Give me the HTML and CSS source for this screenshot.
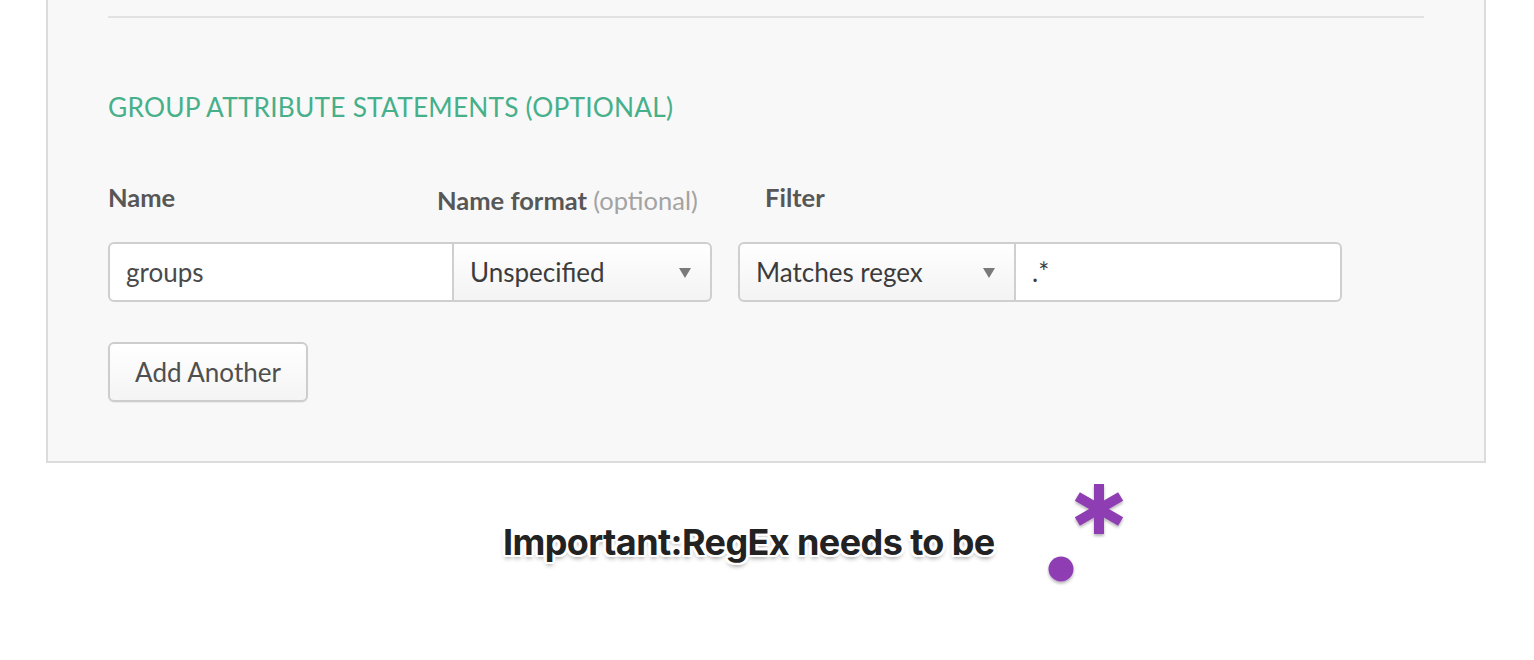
FILE: index.html
```html
<!DOCTYPE html>
<html>
<head>
<meta charset="utf-8">
<link rel="stylesheet" href="styles.css">
</head>
<body>
<div class="panel">
  <div class="divider"></div>
  <h2 class="section-title">GROUP ATTRIBUTE STATEMENTS (OPTIONAL)</h2>
  <div class="labels">
    <div class="label label-name">Name</div>
    <div class="label label-format">Name format <span class="opt">(optional)</span></div>
    <div class="label label-filter">Filter</div>
  </div>
  <div class="row">
    <div class="field field-name">groups</div>
    <div class="select select-format">Unspecified<span class="arrow"></span></div>
    <div class="select select-filter">Matches regex<span class="arrow"></span></div>
    <div class="field field-value">.*</div>
  </div>
  <button class="btn">Add Another</button>
</div>
<div class="note">
  <div class="note-text">Important:RegEx needs to be</div>
  <svg class="regex" width="90" height="110" viewBox="0 0 90 110" aria-label=".*">
    <defs>
      <filter id="sh" x="-30%" y="-30%" width="160%" height="160%">
        <feDropShadow dx="0" dy="2" stdDeviation="1.5" flood-color="#000" flood-opacity="0.3"/>
      </filter>
    </defs>
    <g filter="url(#sh)" fill="#8e3db3">
      <circle cx="14" cy="85" r="12.5"/>
      <g transform="translate(52 25)">
        <rect x="-5" y="-25" width="10" height="50"/>
        <rect x="-5" y="-25" width="10" height="50" transform="rotate(60)"/>
        <rect x="-5" y="-25" width="10" height="50" transform="rotate(120)"/>
      </g>
    </g>
  </svg>
</div>
</body>
</html>
```

FILE: styles.css
```css
html, body {
  margin: 0;
  padding: 0;
  background: #ffffff;
}
body {
  font-family: Lato, "Open Sans", "Liberation Sans", sans-serif;
  color: #4a4a4a;
}
.panel {
  margin-left: 46px;
  width: 1376px;
  background: #f8f8f8;
  border: 2px solid #dcdcdc;
  border-top: none;
  padding: 16px 0 0 60px;
  height: 445px;
  box-sizing: content-box;
}
.divider {
  width: 1316px;
  height: 2px;
  background: #e2e2e2;
}
.section-title {
  margin: 72px 0 0 0;
  font-weight: 400;
  font-size: 26.3px;
  line-height: 34px;
  color: #46b08a;
  letter-spacing: 0.2px;
}
.labels {
  display: flex;
  margin-top: 58px;
  height: 40px;
}
.label {
  font-size: 25.5px;
  font-weight: 700;
  color: #575757;
  line-height: 30px;
}
.label-name { width: 329px; }
.label-format { width: 328px; padding-top: 3px; }
.label-format .opt { font-weight: 400; color: #a3a3a3; }
.row {
  display: flex;
  margin-top: 20px;
  height: 60px;
}
.field, .select {
  box-sizing: border-box;
  height: 60px;
  border: 2px solid #cfcfcf;
  font-size: 26px;
  color: #3c3c3c;
  display: flex;
  align-items: center;
  position: relative;
}
.field { background: #ffffff; }
.select {
  background: linear-gradient(#ffffff, #f3f3f3);
}
.field-name {
  width: 346px;
  border-radius: 6px 0 0 6px;
  padding-left: 16px;
  color: #4a4a4a;
}
.select-format {
  width: 258px;
  border-left: 0;
  border-radius: 0 6px 6px 0;
  padding-left: 16px;
}
.select-filter {
  width: 278px;
  margin-left: 26px;
  border-radius: 6px 0 0 6px;
  padding-left: 16px;
}
.field-value {
  width: 326px;
  border-left: 0;
  border-radius: 0 6px 6px 0;
  padding-left: 16px;
}
.arrow {
  position: absolute;
  right: 19px;
  top: 24px;
  width: 0;
  height: 0;
  border-left: 6px solid transparent;
  border-right: 6px solid transparent;
  border-top: 10px solid #7a7a7a;
}
.btn {
  display: block;
  margin-top: 40px;
  width: 200px;
  height: 60px;
  border: 2px solid #cdcdcd;
  border-radius: 6px;
  background: linear-gradient(#ffffff, #f4f4f4);
  font-family: Lato, "Open Sans", "Liberation Sans", sans-serif;
  font-size: 26px;
  color: #4f4f4f;
  padding: 0;
  box-shadow: 0 1px 1px rgba(0,0,0,0.06);
}
.note {
  display: flex;
  align-items: flex-start;
  padding-left: 503px;
  margin-top: 21px;
}
.note-text {
  margin-top: 38px;
  font-family: Inter, "Liberation Sans", sans-serif;
  font-weight: 700;
  font-size: 36px;
  line-height: 40px;
  color: #222222;
  letter-spacing: -0.6px;
  text-shadow:
    2px 0 0 #fff, -2px 0 0 #fff, 0 2px 0 #fff, 0 -2px 0 #fff,
    2px 2px 0 #fff, -2px -2px 0 #fff, 2px -2px 0 #fff, -2px 2px 0 #fff,
    3px 0 1px #fff, -3px 0 1px #fff, 0 -3px 1px #fff,
    0 3px 5px rgba(0,0,0,0.45);
}
.regex {
  margin-left: 52px;
  margin-top: 0;
}
```
